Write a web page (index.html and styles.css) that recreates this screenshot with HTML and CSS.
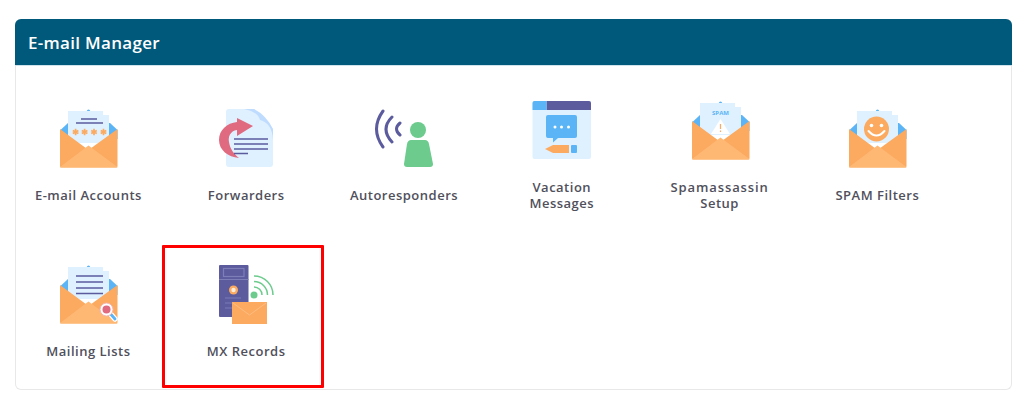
FILE: index.html
```html
<!DOCTYPE html>
<html lang="en">
<head>
    <meta charset="UTF-8">
    <meta name="viewport" content="width=device-width, initial-scale=1.0">
    <title>E-mail Manager</title>
    <link rel="stylesheet" href="styles.css">
</head>
<body>
    <svg class="sprites" width="0" height="0" aria-hidden="true">
        <defs>
            <g id="env-back">
                <circle cx="30.500" cy="2" r="1.600" fill="#5ab4f5"/>
                <path d="M2.500 21 L10 14 H52 L59.500 21 V30 H2.500 Z" fill="#5ab4f5"/>
            </g>
            <path id="paper" d="M10 2 H45 V6 H51 V34 H10 Z" fill="#dff1ff"/>
            <g id="env-front">
                <path d="M2 20 L30.500 41 L59.500 20 V57 Q59.500 58.500 58 58.500 H3.500 Q2 58.500 2 57 Z" fill="#fbaa60"/>
                <path d="M2 58 L30.500 36.500 L59.500 58 Q59.500 58.500 58 58.500 H3.500 Q2 58.500 2 58 Z" fill="#ffb874"/>
            </g>
            <path id="star" d="M0 -3.200 V3.200 M-2.800 -1.600 L2.800 1.600 M-2.800 1.600 L2.800 -1.600" stroke="#fbaa60" stroke-width="1.700" fill="none"/>
        </defs>
    </svg>

    <div class="card">
        <div class="card-header">E-mail Manager</div>
        <div class="card-body">
            <div class="icon-grid">
                <a class="icon-item">
                    <svg class="icon" viewBox="0 0 60 60">
                        <use href="#env-back"/>
                        <use href="#paper"/>
                        <path d="M23 10 H39 M18 14 H45" stroke="#5b5b9e" stroke-width="1.300"/>
                        <use href="#star" x="17.600" y="23"/>
                        <use href="#star" x="26.600" y="23"/>
                        <use href="#star" x="36" y="23"/>
                        <use href="#star" x="45.500" y="23"/>
                        <use href="#env-front"/>
                    </svg>
                    <span class="icon-label">E-mail Accounts</span>
                </a>
                <a class="icon-item">
                    <svg class="icon" viewBox="0 0 60 60">
                        <path d="M13 0 H38 L57 20 V55 Q57 58 54 58 H13 Q10 58 10 55 V3 Q10 0 13 0 Z" fill="#dff1ff"/>
                        <path d="M28 0 H38 Q50 6 57 20 V31 Q56 14 44 11 Q42 3 28 0 Z" fill="#bfdcff"/>
                        <path d="M21 9 L37 17 L21 27 V21 C14 22 12 28 13 33 C14 40 18 45 23 49 C12 48 3 41 3 31 C3 21 11 14 21 13 Z" fill="#e06a80"/>
                        <path d="M18 30 H52 M18 35 H52 M18 40 H52 M18 44.500 H32" stroke="#5b5b9e" stroke-width="1.400"/>
                    </svg>
                    <span class="icon-label">Forwarders</span>
                </a>
                <a class="icon-item">
                    <svg class="icon" viewBox="0 0 60 60">
                        <path d="M9 2 Q-4 20 9 38 M18 8 Q6 20 18 33 M26 14 Q19 20 26 26" fill="none" stroke="#5b5b9e" stroke-width="3" stroke-linecap="round"/>
                        <circle cx="44" cy="21" r="8" fill="#6ccb8d"/>
                        <path d="M37 31 H51 Q54 31 55 35 L59 55 Q59 58 56 58 H33 Q30 58 30 55 L33 35 Q34 31 37 31 Z" fill="#6ccb8d"/>
                    </svg>
                    <span class="icon-label">Autoresponders</span>
                </a>
                <a class="icon-item">
                    <svg class="icon" viewBox="0 0 60 60">
                        <rect x="0.500" y="0" width="58.500" height="58" rx="2" fill="#dff1ff"/>
                        <path d="M14.500 0 H57 Q59 0 59 2 V9 H14.500 Z" fill="#5b5b9e"/>
                        <path d="M14.500 0 H2.500 Q0.500 0 0.500 2 V9 H14.500 Z" fill="#5ab4f5"/>
                        <path d="M16 14 H43 Q45 14 45 16 V35 Q45 37 43 37 H26 L21 41.500 V37 H16 Q14 37 14 35 V16 Q14 14 16 14 Z" fill="#5ab4f5"/>
                        <circle cx="23" cy="26" r="1.500" fill="#fff"/>
                        <circle cx="29.500" cy="26" r="1.500" fill="#fff"/>
                        <circle cx="36.500" cy="26" r="1.500" fill="#fff"/>
                        <path d="M13 48 L21 44 H37 V52 H21 Z" fill="#fbaa60"/>
                        <rect x="39" y="44" width="6" height="8" rx="1" fill="#5ab4f5"/>
                    </svg>
                    <span class="icon-label">Vacation<br>Messages</span>
                </a>
                <a class="icon-item">
                    <svg class="icon" viewBox="0 0 60 60">
                        <use href="#env-back"/>
                        <use href="#paper"/>
                        <text class="spam-word" x="30.500" y="13.500">SPAM</text>
                        <path d="M30.500 18 L40 33 H21 Z" fill="#fff"/>
                        <path d="M30.500 23 V28 M30.500 29.500 V31" stroke="#fbaa60" stroke-width="1.200"/>
                        <use href="#env-front"/>
                    </svg>
                    <span class="icon-label"><span class="label-wide">Spamassassin</span><br>Setup</span>
                </a>
                <a class="icon-item">
                    <svg class="icon" viewBox="0 0 60 60">
                        <use href="#env-back"/>
                        <use href="#paper"/>
                        <circle cx="29.500" cy="20" r="12.500" fill="#fbaa60"/>
                        <circle cx="24.500" cy="16.500" r="1.800" fill="#fff"/>
                        <circle cx="34.500" cy="16.500" r="1.800" fill="#fff"/>
                        <path d="M21.500 22 Q29.500 31 37.500 22" fill="none" stroke="#fff" stroke-width="2" stroke-linecap="round"/>
                        <use href="#env-front"/>
                    </svg>
                    <span class="icon-label">SPAM Filters</span>
                </a>
                <a class="icon-item">
                    <svg class="icon" viewBox="0 0 60 60">
                        <use href="#env-back"/>
                        <use href="#paper"/>
                        <path d="M18 11 H45 M18 17 H45 M18 23 H45 M18 28.500 H45" stroke="#5b5b9e" stroke-width="1.500"/>
                        <use href="#env-front"/>
                        <path d="M50 46 L57 54" stroke="#fff" stroke-width="5.500" stroke-linecap="round"/>
                        <path d="M50 46 L57 54" stroke="#5ab4f5" stroke-width="2.800" stroke-linecap="round"/>
                        <circle cx="48.500" cy="44.500" r="6.500" fill="#fff" stroke="#f3b6b4" stroke-width="1"/>
                        <circle cx="48.500" cy="44.500" r="4" fill="#e06a80"/>
                    </svg>
                    <span class="icon-label">Mailing Lists</span>
                </a>
                <a class="icon-item">
                    <svg class="icon" viewBox="0 0 60 60">
                        <rect x="3" y="0" width="29.500" height="52" rx="1" fill="#5b5b9e"/>
                        <rect x="7.500" y="3.500" width="20.500" height="8" fill="none" stroke="#7d7db8" stroke-width="1.200"/>
                        <path d="M3 14.500 H32.500 M9 33 H25 M9 38 H25 M9 43 H16" stroke="#7d7db8" stroke-width="1.200"/>
                        <circle cx="17.500" cy="25" r="4.500" fill="#fbaa60"/>
                        <circle cx="17.500" cy="25" r="2.200" fill="#ffeedd"/>
                        <circle cx="38" cy="30" r="3.500" fill="#6ccb8d"/>
                        <path d="M38 22 A8 8 0 0 1 46 30 M38 16.500 A13.500 13.500 0 0 1 51.500 30 M38 11 A19 19 0 0 1 57 30" fill="none" stroke="#6ccb8d" stroke-width="1.500"/>
                        <rect x="16" y="37" width="35" height="22" fill="#fbaa60"/>
                        <path d="M17 38 L33.500 50 L50 38" fill="none" stroke="#ffbd80" stroke-width="1"/>
                    </svg>
                    <span class="icon-label">MX Records</span>
                </a>
            </div>
            <div class="highlight-box"></div>
        </div>
    </div>
</body>
</html>
```

FILE: styles.css
```css
html, body {
    margin: 0;
    height: 406px;
    overflow: hidden;
}
body {
    font-family: "Open Sans", sans-serif;
    background-color: #fff;
    padding: 19px 12px 0 15px;
    box-sizing: border-box;
}
.sprites {
    display: block;
    height: 0;
}
.card {
    position: relative;
    height: 371px;
    box-sizing: border-box;
    border: 1px solid #e8e8e8;
    border-top: none;
    border-radius: 6px;
    background: #fff;
}
.card-header {
    height: 46px;
    margin: 0 -1px;
    padding: 0 13px;
    display: flex;
    align-items: center;
    font-size: 17px;
    font-weight: 600;
    letter-spacing: 0.3px;
    color: #fff;
    background: #00587a;
    border-bottom: 1px solid #cfe3ec;
    border-radius: 6px 6px 0 0;
}
.card-body {
    padding-top: 11.5px;
}
.icon-grid {
    display: grid;
    grid-template-columns: repeat(6, 157.8px);
    grid-auto-rows: 156px;
    margin-left: -6.5px;
}
.icon-item {
    display: flex;
    flex-direction: column;
    align-items: center;
    justify-content: center;
    text-align: center;
}
.icon {
    display: block;
    width: 60px;
    height: 60px;
    margin-bottom: 18px;
}
.icon-label {
    font-size: 13px;
    line-height: 16px;
    font-weight: 600;
    letter-spacing: 0.5px;
    color: #50505c;
}
.label-wide {
    letter-spacing: 0.9px;
}
.spam-word {
    font-size: 6px;
    font-weight: 700;
    fill: #5ab4f5;
    text-anchor: middle;
}
.highlight-box {
    position: absolute;
    left: 146px;
    top: 226px;
    width: 162px;
    height: 143px;
    box-sizing: border-box;
    border: 3px solid #f00;
    border-radius: 1px;
}
```
